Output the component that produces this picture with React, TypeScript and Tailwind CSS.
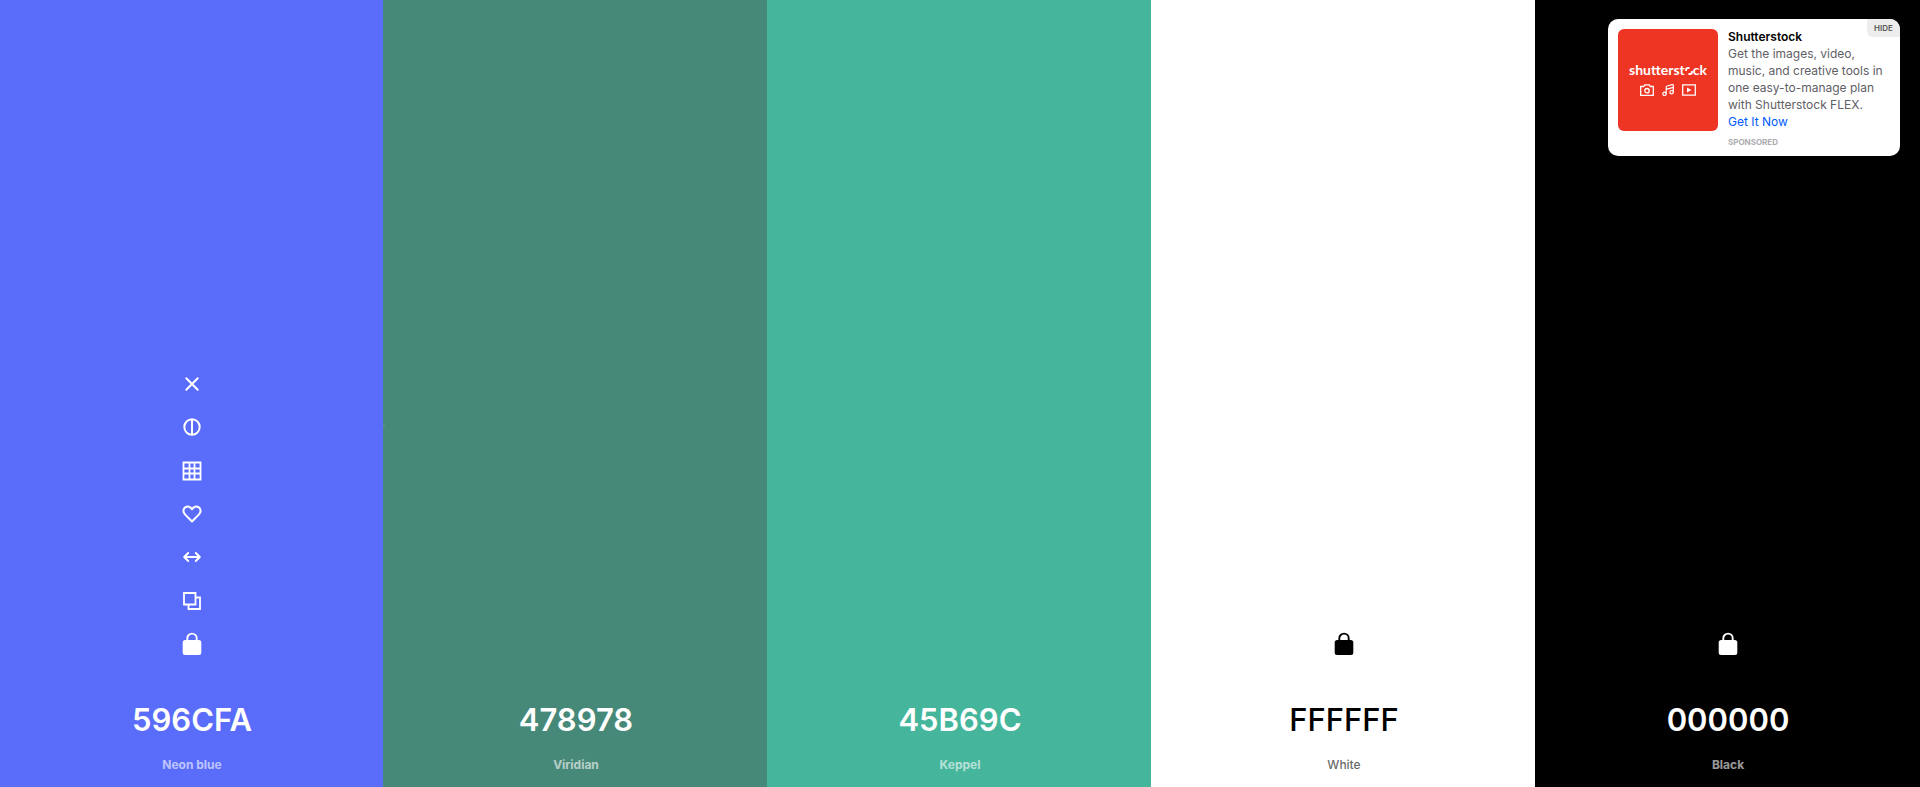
import type { ReactNode } from "react";

type Swatch = {
  hex: string;
  name: string;
  column: string;
  title: string;
  subtitle: string;
  locked: boolean;
  tools: boolean;
  handle: boolean;
};

const swatches: Swatch[] = [
  { hex: "596CFA", name: "Neon blue", column: "bg-[#596cfa] text-white", title: "font-semibold", subtitle: "font-bold", locked: true, tools: true, handle: false },
  { hex: "478978", name: "Viridian", column: "bg-[#478978] text-white", title: "font-semibold", subtitle: "font-bold", locked: false, tools: false, handle: true },
  { hex: "45B69C", name: "Keppel", column: "bg-[#45b69c] text-white", title: "font-semibold", subtitle: "font-bold", locked: false, tools: false, handle: false },
  { hex: "FFFFFF", name: "White", column: "bg-white text-black", title: "font-medium", subtitle: "font-medium", locked: true, tools: false, handle: false },
  { hex: "000000", name: "Black", column: "bg-black text-white", title: "font-semibold", subtitle: "font-bold", locked: true, tools: false, handle: false },
];

function Icon({ children }: { children: ReactNode }) {
  return (
    <svg className="size-6" viewBox="0 0 24 24" fill="none" stroke="currentColor" strokeWidth="2" aria-hidden="true">
      {children}
    </svg>
  );
}

const tools = [
  { label: "Remove color", icon: <Icon><path d="M6.300 6.300l11.400 11.400M17.700 6.300L6.300 17.700" strokeLinecap="round" /></Icon> },
  { label: "View shades", icon: <Icon><circle cx="12" cy="12" r="7.700" /><path d="M12 4v16" /></Icon> },
  { label: "Color grid", icon: <Icon><path d="M3.500 3.500h17v17h-17zM9.500 4v16M14.500 4v16M4 9.500h16M4 14.500h16" strokeWidth="1.800" /></Icon> },
  { label: "Save color", icon: <Icon><path d="M12 19.500L5 12.400C2.800 10.200 3 7 5.200 5.400c2.200-1.600 5.200-.9 6.800 1.900 1.600-2.800 4.600-3.500 6.800-1.900C21 7 21.200 10.200 19 12.400z" strokeLinejoin="round" /></Icon> },
  { label: "Drag color", icon: <Icon><path d="M4.500 12h15M8.200 8L4.200 12l4 4M15.800 8l4 4-4 4" strokeLinecap="round" strokeLinejoin="round" /></Icon> },
  { label: "Copy hex", icon: <Icon><path d="M4 4h11.500v11.500H4z" strokeWidth="1.800" /><path d="M15.500 8.500H20V20H8.500v-4.500" strokeWidth="1.800" /></Icon> },
];

function LockIcon() {
  return (
    <svg className="size-6" viewBox="0 0 24 24" fill="none" aria-hidden="true">
      <path d="M7.300 9V6.300a4.700 4.700 0 0 1 9.400 0V9" stroke="currentColor" strokeWidth="1.900" />
      <rect x="2.700" y="8" width="18.600" height="15" rx="2.500" fill="currentColor" />
    </svg>
  );
}

function Column({ swatch }: { swatch: Swatch }) {
  return (
    <section className={`relative flex flex-1 flex-col items-center justify-end pb-3 pl-0.5 ${swatch.column}`}>
      {swatch.handle && <span className="absolute left-0 top-[425px] size-0.5 bg-white/10" />}
      <div className={`grid auto-rows-fr ${swatch.tools ? "h-[304px]" : "h-11"}`}>
        {swatch.tools &&
          tools.map((tool) => (
            <button key={tool.label} type="button" aria-label={tool.label} className="flex w-11 items-center justify-center">
              {tool.icon}
            </button>
          ))}
        {swatch.locked && (
          <button type="button" aria-label="Unlock color" className="flex w-11 items-center justify-center">
            <LockIcon />
          </button>
        )}
      </div>
      <h2 className={`mt-[34px] text-[31px] leading-10 ${swatch.title}`}>{swatch.hex}</h2>
      <p className={`mt-[15px] text-xs leading-5 opacity-60 ${swatch.subtitle}`}>{swatch.name}</p>
    </section>
  );
}

function BrandTile() {
  return (
    <div className="flex h-[102px] w-[100px] shrink-0 flex-col items-center justify-center rounded-md bg-[#ee3524] pb-0.5 text-white">
      <div className="flex items-center font-['Lato',sans-serif] text-sm font-bold leading-4">
        <span>shutterst</span>
        <svg className="h-3 w-2" viewBox="0 0 8 12" fill="none" stroke="currentColor" strokeWidth="1.800" aria-hidden="true">
          <path d="M1 7V6q0-2 2-2h1.500M7 7v1q0 2-2 2H3.500" />
        </svg>
        <span>ck</span>
      </div>
      <div className="mt-1.5 flex items-center gap-2">
        <svg className="h-3 w-3.5" viewBox="0 0 14 12" fill="none" stroke="currentColor" strokeWidth="1.300" aria-hidden="true">
          <path d="M.7 2.500h3L4.700.8h4.600l1 1.700h3v8.800H.7z" />
          <circle cx="7" cy="6.700" r="2.200" />
        </svg>
        <svg className="h-3 w-3" viewBox="0 0 12 12" fill="none" stroke="currentColor" strokeWidth="1.200" aria-hidden="true">
          <path d="M4.200 9.800V3.200q0-1 1-1.200l5-1.300q1.100-.2 1.100.8v6.700M4.200 5.300l7.100-2" />
          <circle cx="2.500" cy="9.800" r="1.700" />
          <circle cx="9.600" cy="8.200" r="1.700" />
        </svg>
        <svg className="h-3 w-3.5" viewBox="0 0 14 12" fill="none" stroke="currentColor" strokeWidth="1.300" aria-hidden="true">
          <path d="M.7.8h12.600v10.400H.7z" />
          <path d="M5 3.500L9.500 6 5 8.500z" fill="currentColor" stroke="none" />
        </svg>
      </div>
    </div>
  );
}

function SponsorCard() {
  return (
    <aside className="absolute right-5 top-[19px] flex w-[292px] gap-2.5 overflow-hidden rounded-[10px] bg-white px-2.5 pb-2 pt-[9px]">
      <div className="pt-px">
        <BrandTile />
      </div>
      <div className="text-xs leading-[17px] text-[#5f6066]">
        <strong className="block font-semibold text-black">Shutterstock</strong>
        <p>Get the images, video, music, and creative tools in one easy-to-manage plan with Shutterstock FLEX.</p>
        <a href="#get-it-now" className="block text-[#0059ff]">Get It Now</a>
        <p className="mt-1.5 text-[8px] font-bold leading-3 text-[#acacae]">SPONSORED</p>
      </div>
      <button type="button" className="absolute right-0 top-0 h-[18px] w-[33px] rounded-bl-md bg-[#ededed] text-[8px] font-semibold text-[#555]">
        HIDE
      </button>
    </aside>
  );
}

export default function App() {
  return (
    <main className="relative overflow-hidden bg-black font-['Inter',sans-serif]">
      <div className="-ml-px flex min-h-screen pr-px">
        {swatches.map((swatch) => (
          <Column key={swatch.hex} swatch={swatch} />
        ))}
      </div>
      <SponsorCard />
    </main>
  );
}
